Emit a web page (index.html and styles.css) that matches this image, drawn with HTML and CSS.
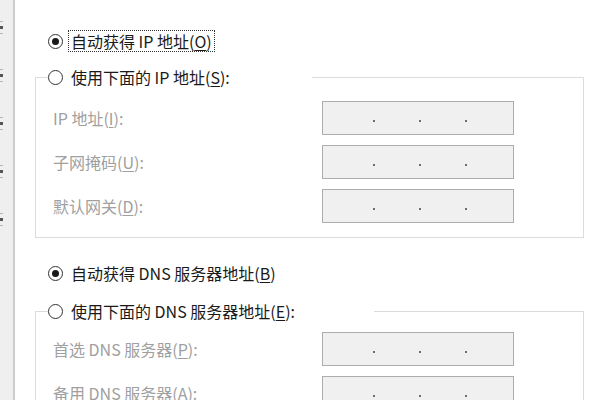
FILE: index.html
```html
<!DOCTYPE html>
<html lang="zh-CN">
<head>
    <meta charset="utf-8" />
    <title>Internet 协议版本 4 (TCP/IPv4) 属性</title>
    <link rel="stylesheet" href="styles.css">
</head>
<body>
<div class="edge"></div>

<div class="page">
    <label class="opt opt-ip">
        <span class="radio on"></span>
        <span class="focus">自动获得 IP 地址(<u>O</u>)</span>
    </label>

    <fieldset class="group group-ip">
        <legend><span class="radio"></span>使用下面的 IP 地址(<u>S</u>):</legend>
        <div class="row">
            <span class="lbl">IP 地址(<u>I</u>):</span>
            <span class="addr"><i></i><i></i><i></i></span>
        </div>
        <div class="row">
            <span class="lbl">子网掩码(<u>U</u>):</span>
            <span class="addr"><i></i><i></i><i></i></span>
        </div>
        <div class="row">
            <span class="lbl">默认网关(<u>D</u>):</span>
            <span class="addr"><i></i><i></i><i></i></span>
        </div>
    </fieldset>

    <label class="opt opt-dns">
        <span class="radio on"></span>
        <span class="plain">自动获得 DNS 服务器地址(<u>B</u>)</span>
    </label>

    <fieldset class="group group-dns">
        <legend><span class="radio"></span>使用下面的 DNS 服务器地址(<u>E</u>):</legend>
        <div class="row">
            <span class="lbl">首选 DNS 服务器(<u>P</u>):</span>
            <span class="addr"><i></i><i></i><i></i></span>
        </div>
        <div class="row">
            <span class="lbl">备用 DNS 服务器(<u>A</u>):</span>
            <span class="addr"><i></i><i></i><i></i></span>
        </div>
    </fieldset>
</div>
</body>
</html>
```

FILE: styles.css
```css
html,body{height:100%;}
body{margin:0;display:flex;overflow:hidden;background:#fff;color:#1a1a1a;
     font-family:"Noto Sans CJK SC","Liberation Sans",sans-serif;font-size:16px;line-height:22px;}
u{text-underline-offset:2px;}

/* window behind, only its right edge shows */
.edge{flex:none;width:13px;border-right:2px solid #cdcdcd;background-color:#efefef;
      background-image:repeating-linear-gradient(180deg,transparent 0 21px,#b8b8b8 21px 22px,transparent 22px 26px,#555 26px 29px,transparent 29px 33px,#b8b8b8 33px 34px,transparent 34px 48px);
      background-size:3px 250px;background-repeat:no-repeat;}

.page{flex:none;width:549px;padding:30px 0 0 20px;}

.opt{display:flex;align-items:center;height:22px;padding-left:13px;}
.opt-dns{margin-top:24px;}
.opt .focus{margin-left:5px;padding:0 2px;border:1px dotted #333;line-height:20px;}
.opt .plain{margin-left:8px;}

.radio{flex:none;display:inline-block;position:relative;box-sizing:border-box;width:15px;height:15px;
       border:1px solid #333;border-radius:50%;background:#fff;vertical-align:-2px;}
.radio.on::after{content:"";position:absolute;left:3px;top:3px;width:7px;height:7px;border-radius:50%;background:#1a1a1a;}

.group{margin:14px 0 0;border:1px solid #dcdcdc;padding:13px 0 14px 17px;min-width:0;}
.group legend{padding:0;margin-left:-5px;height:22px;display:flex;align-items:center;}
.group legend .radio{margin-right:8px;}
.group-ip legend{width:264px;}
.group-dns{margin-top:16px;padding-top:10px;}
.group-dns legend{width:326px;}

.row{display:flex;align-items:center;height:34px;}
.row + .row{margin-top:10px;}
.lbl{width:269px;color:#a0a0a0;}

.addr{box-sizing:border-box;width:192px;height:34px;border:1px solid #adadad;background:#f0f0f0;
      display:flex;justify-content:center;align-items:center;gap:44px;padding:5px 0 0 3px;}
.addr i{width:2px;height:2px;background:#6d6d6d;}
```
